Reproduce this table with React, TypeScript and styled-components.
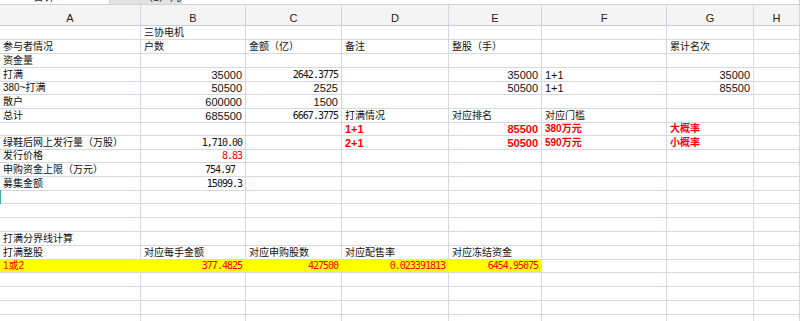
import styled, { createGlobalStyle } from "styled-components";

type Kind = "text" | "num" | "mono";

type CellData = {
    v: string
    kind?: Kind
    left?: boolean
    red?: boolean
    bold?: boolean
    pad?: number
}

type RowData = {
    cells: Record<number, CellData>
    fill?: number
}

const COLS = [141, 105, 96, 107, 93, 125, 87, 46];
const LETTERS = ["A", "B", "C", "D", "E", "F", "G", "H"];
const ROW_H = [14, 14, 14, 14, 13, 14, 14, 13, 14, 13, 14, 14, 13, 14, 14, 14, 14, 13, 14, 14, 14, 14];

const t = (v: string, extra: Partial<CellData> = {}): CellData => ({v, kind: "text", left: true, ...extra});
const n = (v: string, extra: Partial<CellData> = {}): CellData => ({v, kind: "num", ...extra});
const m = (v: string, extra: Partial<CellData> = {}): CellData => ({v, kind: "mono", ...extra});
const hot = {red: true, bold: true};

const ROWS: RowData[] = [
    {cells: {1: t("三协电机")}},
    {cells: {0: t("参与者情况"), 1: t("户数"), 2: t("金额（亿）"), 3: t("备注"), 4: t("整股（手）"), 6: t("累计名次")}},
    {cells: {0: t("资金量")}},
    {cells: {0: t("打满"), 1: n("35000"), 2: m("2642.3775"), 4: n("35000"), 5: n("1+1", {left: true}), 6: n("35000")}},
    {cells: {0: t("380~打满"), 1: n("50500"), 2: n("2525"), 4: n("50500"), 5: n("1+1", {left: true}), 6: n("85500")}},
    {cells: {0: t("散户"), 1: n("600000"), 2: n("1500")}},
    {cells: {0: t("总计"), 1: n("685500"), 2: m("6667.3775"), 3: t("打满情况"), 4: t("对应排名"), 5: t("对应门槛")}},
    {cells: {3: n("1+1", {left: true, ...hot}), 4: n("85500", hot), 5: t("380万元", hot), 6: t("大概率", hot)}},
    {cells: {0: t("绿鞋后网上发行量（万股）"), 1: m("1,710.00"), 3: n("2+1", {left: true, ...hot}), 4: n("50500", hot), 5: t("590万元", hot), 6: t("小概率", hot)}},
    {cells: {0: t("发行价格"), 1: m("8.83", {red: true})}},
    {cells: {0: t("申购资金上限（万元）"), 1: m("754.97", {pad: 10})}},
    {cells: {0: t("募集金额"), 1: m("15099.3")}},
    {cells: {}},
    {cells: {}},
    {cells: {}},
    {cells: {0: t("打满分界线计算")}},
    {cells: {0: t("打满整股"), 1: t("对应每手金额"), 2: t("对应申购股数"), 3: t("对应配售率"), 4: t("对应冻结资金")}},
    {
        fill: 5,
        cells: {
            0: t("1或2", {red: true}),
            1: m("377.4825", {red: true}),
            2: m("427500", {red: true}),
            3: m("0.023391813", {red: true}),
            4: m("6454.95075", {red: true}),
        },
    },
    {cells: {}},
    {cells: {}},
    {cells: {}},
    {cells: {}},
];

const GlobalStyle = createGlobalStyle`
    html, body {
        margin: 0;
        padding: 0;
        background: #fff;
        overflow: hidden;
    }
    * {
        box-sizing: border-box;
    }
`

const Sheet = styled.div`
    position: relative;
    width: 800px;
    height: 321px;
    overflow: hidden;
    background: #fff;
    font-family: "Liberation Sans", "Noto Sans CJK SC", sans-serif;
    color: #111;
`

const TabStrip = styled.div`
    display: flex;
    height: 5px;
    background: #e3e3e3;
    border-bottom: 1px solid #d2d2d2;
    overflow: hidden;
`

const Tab = styled.div<{ $w?: number; $active?: boolean }>`
    flex: ${p => (p.$w ? `0 0 ${p.$w}px` : "1")};
    background: ${p => (p.$active ? "transparent" : "#fff")};
    border-right: 1px solid #cfcfcf;
    font-size: 11px;
    line-height: 12px;
    color: #333;
    padding-left: ${p => (p.$active ? 32 : 33)}px;
    white-space: nowrap;
    & > span {
        display: block;
        margin-top: -9px;
    }
`

const HeaderRow = styled.div`
    display: grid;
    grid-template-columns: ${COLS.map(c => `${c}px`).join(" ")};
    height: 21px;
    background: #f4f4f4;
    border-bottom: 1px solid #c9ccd4;
`

const HeaderCell = styled.div`
    border-right: 1px solid #d3d6de;
    font-size: 11px;
    line-height: 13px;
    padding-top: 7px;
    text-align: center;
    color: #222;
`

const Row = styled.div<{ $h: number }>`
    display: grid;
    grid-template-columns: ${COLS.map(c => `${c}px`).join(" ")};
    height: ${p => p.$h}px;
`

const Cell = styled.div<{
    $kind: Kind
    $left: boolean
    $red: boolean
    $bold: boolean
    $fill: boolean
    $pad: number
}>`
    display: flex;
    align-items: center;
    justify-content: ${p => (p.$left ? "flex-start" : "flex-end")};
    padding: 0 ${p => p.$pad}px 0 3px;
    border-bottom: 1px solid #d6d9e3;
    border-right: 1px solid ${p => (p.$fill ? "#ffff00" : "#d6d9e3")};
    background: ${p => (p.$fill ? "#ffff00" : "transparent")};
    white-space: nowrap;
    overflow: visible;
    color: ${p => (p.$red ? "#ff0000" : "#111")};
    font-weight: ${p => (p.$bold ? 700 : 400)};
    font-family: ${p => (p.$kind === "mono"
        ? `"DejaVu Sans Mono", "Noto Sans CJK SC", monospace`
        : `"Liberation Sans", "Noto Sans CJK SC", sans-serif`)};
    font-size: ${p => (p.$kind === "num" ? 11 : 10)}px;
    letter-spacing: ${p => (p.$kind === "mono" ? "-1px" : "0")};
    line-height: 12px;
`

const Marker = styled.div`
    position: absolute;
    left: 0;
    top: 190px;
    width: 1px;
    height: 14px;
    background: #3cb39a;
`

export default function App() {
    return (
        <>
            <GlobalStyle/>
            <Sheet>
                <TabStrip>
                    <Tab $w={110}><span>合计</span></Tab>
                    <Tab $w={64} $active><span>（1）凡</span></Tab>
                    <Tab/>
                </TabStrip>
                <HeaderRow>
                    {LETTERS.map(l => <HeaderCell key={l}>{l}</HeaderCell>)}
                </HeaderRow>
                {ROWS.map((row, ri) => (
                    <Row key={ri} $h={ROW_H[ri]}>
                        {COLS.map((_, ci) => {
                            const c = row.cells[ci];
                            return (
                                <Cell
                                    key={ci}
                                    $kind={c?.kind ?? "text"}
                                    $left={!!c?.left}
                                    $red={!!c?.red}
                                    $bold={!!c?.bold}
                                    $fill={ci < (row.fill ?? 0)}
                                    $pad={c?.pad ?? 3}
                                >
                                    {c?.v}
                                </Cell>
                            );
                        })}
                    </Row>
                ))}
                <Marker/>
            </Sheet>
        </>
    );
}
